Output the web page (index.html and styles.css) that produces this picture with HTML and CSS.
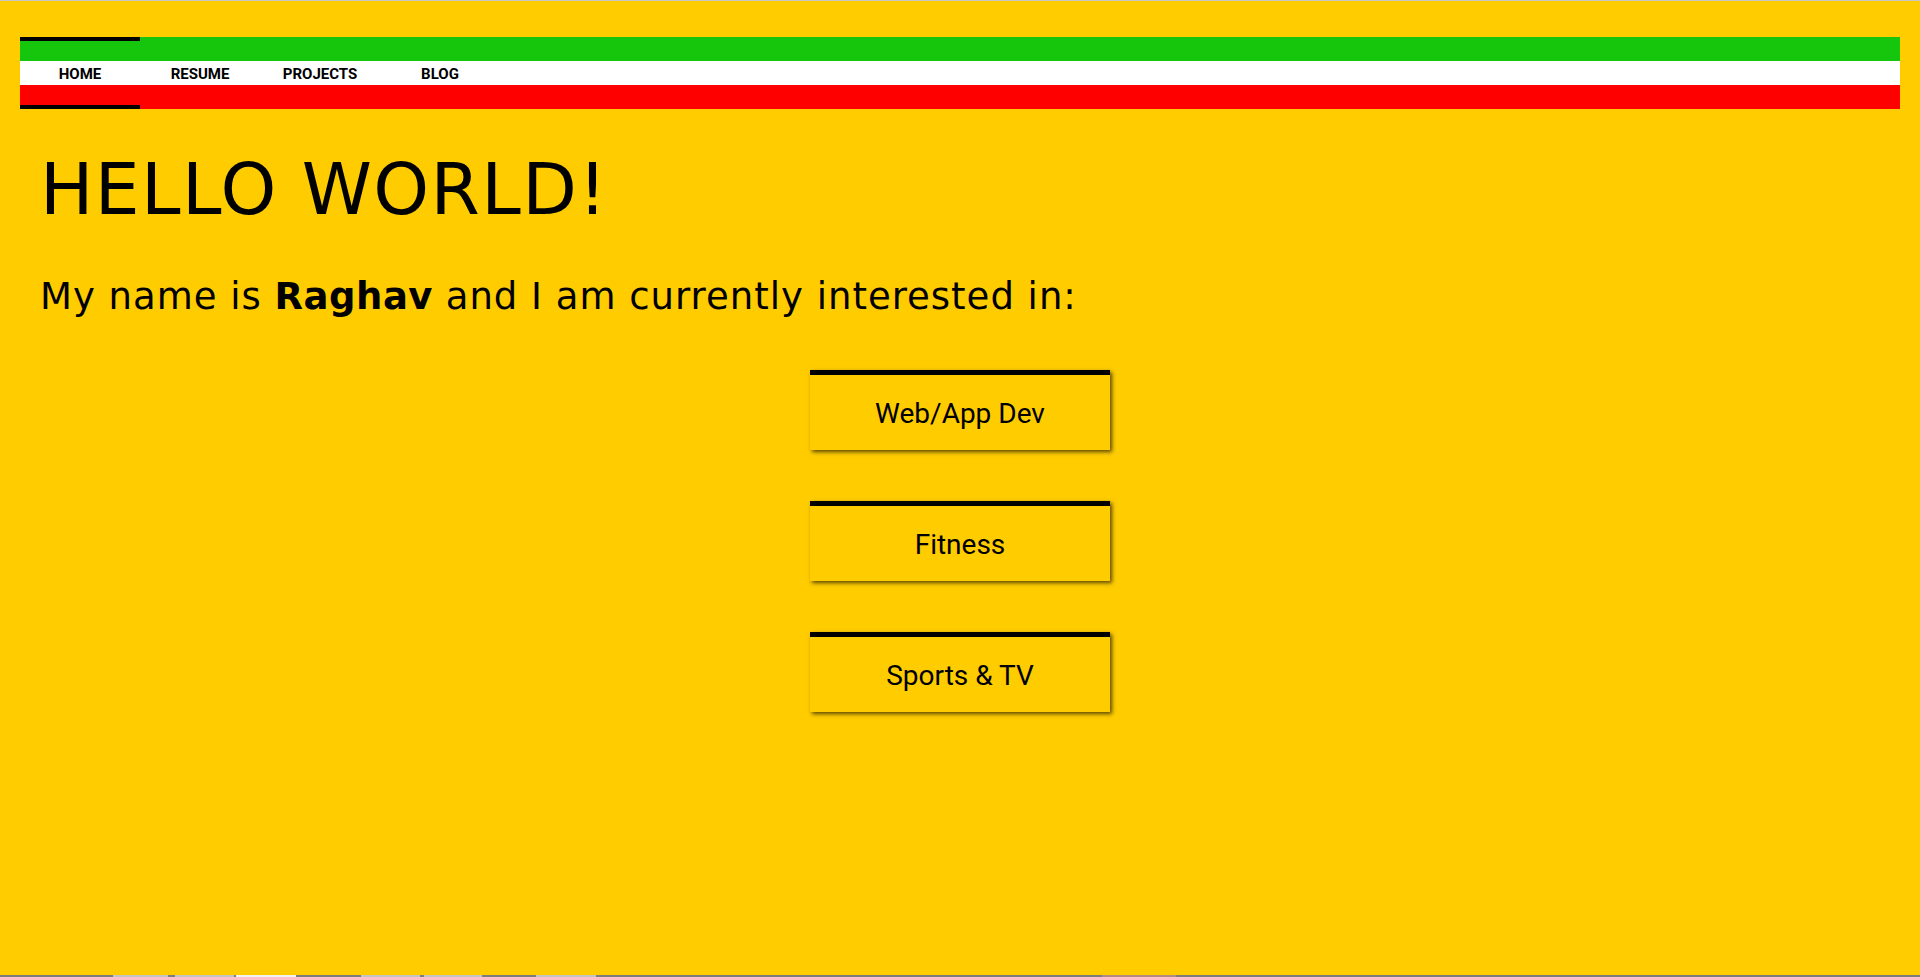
FILE: index.html
```html
<!DOCTYPE html>
<html lang="en">
<head>
<meta charset="utf-8">
<title>Raghav</title>
<link rel="stylesheet" href="styles.css">
</head>
<body>
<nav class="nav">
  <a class="nav-item active" href="#">HOME</a>
  <a class="nav-item" href="#">RESUME</a>
  <a class="nav-item" href="#">PROJECTS</a>
  <a class="nav-item" href="#">BLOG</a>
</nav>
<main class="main">
  <h1 class="title">HELLO WORLD!</h1>
  <p class="intro">My name is <strong class="name">Raghav</strong> and I am currently interested in:</p>
  <div class="interests">
    <div class="card">Web/App Dev</div>
    <div class="card">Fitness</div>
    <div class="card">Sports &amp; TV</div>
  </div>
</main>
<div class="taskbar">
  <span class="tb tb1"></span>
  <span class="tb tb2"></span>
  <span class="tb tb3"></span>
  <span class="tb tb4"></span>
  <span class="tb tb5"></span>
  <span class="tb tb6"></span>
  <span class="tb tb7"></span>
</div>
</body>
</html>
```
FILE: styles.css
```css
html, body {
  height: 100%;
}
body {
  margin: 0;
  box-sizing: border-box;
  border-top: 1px solid #c8c8c8;
  padding: 36px 20px 0;
  background: #ffcc00;
  color: #000;
  font-family: "DejaVu Sans", sans-serif;
  overflow: hidden;
}
.nav {
  display: flex;
  height: 72px;
  background: linear-gradient(to bottom, #16c60c 0, #16c60c 24px, #ffffff 24px, #ffffff 48px, #ff0000 48px, #ff0000 72px);
}
.nav-item {
  width: 120px;
  box-sizing: border-box;
  display: flex;
  align-items: center;
  justify-content: center;
  padding-top: 2px;
  font-family: Roboto, "Liberation Sans", sans-serif;
  font-weight: 700;
  font-size: 15px;
  color: #000;
  text-decoration: none;
  border-top: 4px solid transparent;
  border-bottom: 4px solid transparent;
}
.nav-item.active {
  border-top-color: #000;
  border-bottom-color: #000;
}
.main {
  padding: 0 0 0 20px;
}
.title {
  margin: 45px 0 0;
  font-size: 71px;
  line-height: 1;
  font-weight: 400;
  letter-spacing: 1.4px;
}
.intro {
  margin: 53px 0 0;
  font-size: 37px;
  line-height: 1;
  letter-spacing: 1px;
}
.name {
  font-weight: 700;
  letter-spacing: 0.5px;
}
.interests {
  display: flex;
  flex-direction: column;
  align-items: center;
  gap: 51px;
  margin-top: 55px;
  margin-left: -20px;
}
.card {
  width: 300px;
  height: 80px;
  box-sizing: border-box;
  border-top: 5px solid #000;
  padding-top: 2px;
  display: flex;
  align-items: center;
  justify-content: center;
  font-family: Roboto, "Liberation Sans", sans-serif;
  font-size: 28px;
  box-shadow: 2px 2px 4px rgba(0, 0, 0, 0.65);
}
.taskbar {
  position: fixed;
  left: 0;
  right: 0;
  bottom: 0;
  height: 2px;
  background: #7d7d7d;
  display: flex;
}
.tb {
  height: 2px;
  background: #c4c4c4;
}
.tb1 { margin-left: 113px; width: 55px; }
.tb2 { margin-left: 7px; width: 59px; }
.tb3 { margin-left: 2px; width: 60px; background: #f2f2f2; }
.tb4 { margin-left: 65px; width: 59px; }
.tb5 { margin-left: 4px; width: 58px; }
.tb6 { margin-left: 54px; width: 60px; }
.tb7 { margin-left: 506px; width: 74px; background: #b48a80; }
```
